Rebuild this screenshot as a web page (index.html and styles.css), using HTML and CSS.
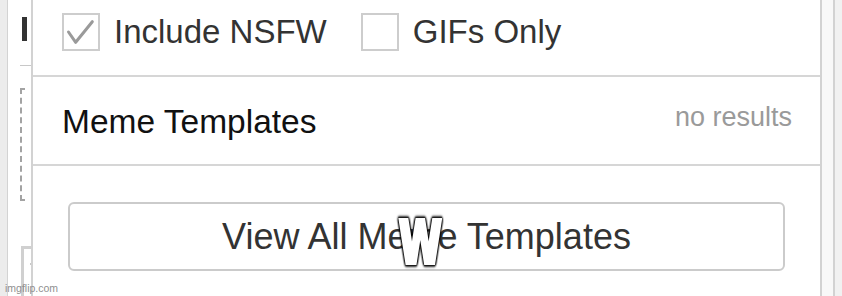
FILE: index.html
```html
<!DOCTYPE html>
<html lang="en">
<head>
<meta charset="utf-8">
<title>Meme search</title>
<link rel="stylesheet" href="styles.css">
</head>
<body>
<div class="page">
  <div class="left">
    <div class="left-bar"></div>
    <div class="left-rule"></div>
    <div class="left-dashed"></div>
    <div class="left-box"><span class="left-dot"></span></div>
  </div>
  <div class="panel">
    <div class="filters">
      <label class="check">
        <span class="box">
          <svg class="tick" width="34" height="34" viewBox="0 0 34 34"><path d="M4.5 17 L11.7 27.3 L28.3 6.7" fill="none" stroke="#9a9a9a" stroke-width="3" stroke-linecap="round" stroke-linejoin="round"/></svg>
        </span>
        <span class="check-label">Include NSFW</span>
      </label>
      <label class="check">
        <span class="box"></span>
        <span class="check-label">GIFs Only</span>
      </label>
    </div>
    <div class="section-head">
      <span class="section-title">Meme Templates</span>
      <span class="section-count">no results</span>
    </div>
    <div class="actions">
      <button class="view-all">View All Meme Templates</button>
    </div>
  </div>
  <div class="right"></div>
</div>
<span class="overlay-w">W</span>
<span class="watermark">imgflip.com</span>
</body>
</html>
```
FILE: styles.css
```css
* { box-sizing: border-box; }
html, body { margin: 0; padding: 0; }
body {
  width: 842px;
  height: 296px;
  overflow: hidden;
  background: #fff;
  font-family: "Liberation Sans", Arial, sans-serif;
  position: relative;
}
.page { display: flex; height: 296px; }

.left {
  width: 31px;
  flex: none;
  background: linear-gradient(to right, #ececec 0 7px, #d3d3d3 7px 8px, #ffffff 8px);
  display: flex;
  flex-direction: column;
  padding: 17px 0 0 20px;
}
.left-bar { width: 5px; height: 24px; margin-left: 2px; background: #333; }
.left-rule { width: 11px; height: 1px; margin-top: 24px; background: #c8c8c8; }
.left-dashed {
  margin-top: 22px;
  height: 113px;
  width: 11px;
  border-left: 2px dashed #a3a3a3;
  border-top: 2px solid transparent;
  position: relative;
}
.left-dashed::before, .left-dashed::after {
  content: "";
  position: absolute;
  left: -2px;
  width: 5px;
  height: 2px;
  background: #a3a3a3;
}
.left-dashed::before { top: -2px; }
.left-dashed::after { bottom: 0; }
.left-box {
  margin-top: 45px;
  margin-left: 1px;
  flex: 1;
  border-left: 3px solid #d0d0d0;
  border-top: 3px solid #d0d0d0;
  position: relative;
}
.left-dot { position: absolute; left: 6px; top: 14px; width: 1px; height: 2px; background: #c8c8c8; }

.panel {
  width: 791px;
  flex: none;
  border-left: 2px solid #d2d2d2;
  border-right: 2px solid #d2d2d2;
  background: #fff;
  display: flex;
  flex-direction: column;
}
.right {
  flex: 1;
  background: linear-gradient(to right, #f8f8f8 0 11px, #d2d2d2 11px 13px, #f1f1f1 13px);
}

.filters {
  height: 77px;
  border-bottom: 2px solid #d6d6d6;
  display: flex;
  align-items: center;
  gap: 34px;
  padding: 0 0 11px 29px;
}
.check { display: flex; align-items: center; gap: 14px; }
.box {
  width: 38px;
  height: 38px;
  border: 2px solid #cdcdcd;
  display: block;
  position: relative;
}
.tick { display: block; }
.check-label { font-size: 33px; color: #333; line-height: 38px; }

.section-head {
  height: 89px;
  border-bottom: 2px solid #d6d6d6;
  display: flex;
  justify-content: space-between;
  align-items: center;
  padding: 0 28px 0 29px;
}
.section-title { font-size: 33.5px; color: #111; margin-top: 3px; }
.section-count { font-size: 27px; color: #9a9a9a; margin-top: -6px; }

.actions { padding: 36px 35px 0 35px; }
.view-all {
  display: block;
  width: 100%;
  height: 69px;
  border: 2px solid #cbcbcb;
  border-radius: 6px;
  background: #fff;
  font-family: "Liberation Sans", Arial, sans-serif;
  font-size: 36px;
  color: #333;
  padding: 0;
}

.overlay-w {
  position: absolute;
  left: 399px;
  top: 214px;
  font-family: "DejaVu Sans Condensed", "Liberation Sans Narrow", sans-serif;
  font-weight: 900;
  font-size: 58px;
  line-height: 1;
  color: #fff;
  -webkit-text-stroke: 4px #fff;
  paint-order: stroke fill;
  transform: scaleX(0.74);
  transform-origin: left top;
  filter: drop-shadow(0 0 1.5px #000) drop-shadow(0 0 1px #000) drop-shadow(0 0 1px #000);
}
.watermark {
  position: absolute;
  left: 5px;
  bottom: 2px;
  font-size: 10.5px;
  color: #8f8f8f;
  font-family: "Liberation Sans", Arial, sans-serif;
}
```
